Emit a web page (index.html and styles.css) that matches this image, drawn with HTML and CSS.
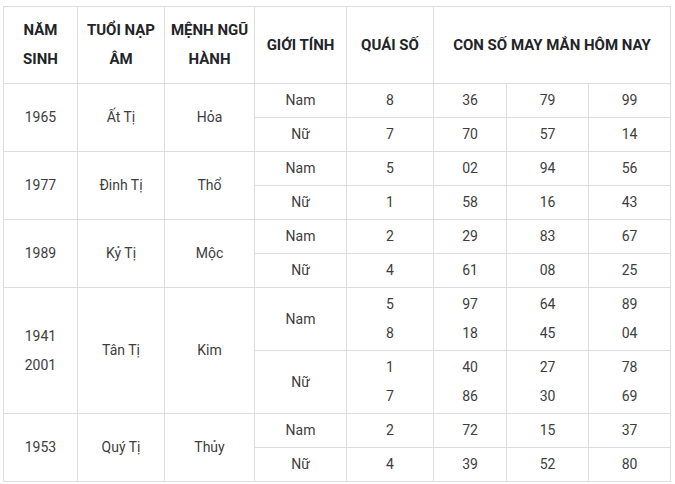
FILE: index.html
```html
<!DOCTYPE html>
<html lang="vi">
<head>
<meta charset="utf-8">
<title>Con số may mắn</title>
<link rel="stylesheet" href="styles.css">
</head>
<body>
<div class="wrap">
<table class="lucky">
  <colgroup>
    <col class="c1"><col class="c2"><col class="c3"><col class="c4"><col class="c5"><col class="c6"><col class="c7"><col class="c8">
  </colgroup>
  <thead>
    <tr>
      <th>NĂM<br>SINH</th>
      <th>TUỔI NẠP<br>ÂM</th>
      <th>MỆNH NGŨ<br>HÀNH</th>
      <th>GIỚI TÍNH</th>
      <th>QUÁI SỐ</th>
      <th colspan="3">CON SỐ MAY MẮN HÔM NAY</th>
    </tr>
  </thead>
  <tbody>
    <tr><td rowspan="2">1965</td><td rowspan="2">Ất Tị</td><td rowspan="2">Hỏa</td><td>Nam</td><td>8</td><td>36</td><td>79</td><td>99</td></tr>
    <tr><td>Nữ</td><td>7</td><td>70</td><td>57</td><td>14</td></tr>
    <tr><td rowspan="2">1977</td><td rowspan="2">Đinh Tị</td><td rowspan="2">Thổ</td><td>Nam</td><td>5</td><td>02</td><td>94</td><td>56</td></tr>
    <tr><td>Nữ</td><td>1</td><td>58</td><td>16</td><td>43</td></tr>
    <tr><td rowspan="2">1989</td><td rowspan="2">Kỷ Tị</td><td rowspan="2">Mộc</td><td>Nam</td><td>2</td><td>29</td><td>83</td><td>67</td></tr>
    <tr><td>Nữ</td><td>4</td><td>61</td><td>08</td><td>25</td></tr>
    <tr><td rowspan="2">1941<br>2001</td><td rowspan="2">Tân Tị</td><td rowspan="2">Kim</td><td>Nam</td><td>5<br>8</td><td>97<br>18</td><td>64<br>45</td><td>89<br>04</td></tr>
    <tr><td>Nữ</td><td>1<br>7</td><td>40<br>86</td><td>27<br>30</td><td>78<br>69</td></tr>
    <tr><td rowspan="2">1953</td><td rowspan="2">Quý Tị</td><td rowspan="2">Thủy</td><td>Nam</td><td>2</td><td>72</td><td>15</td><td>37</td></tr>
    <tr><td>Nữ</td><td>4</td><td>39</td><td>52</td><td>80</td></tr>
  </tbody>
</table>
</div>
</body>
</html>
```
FILE: styles.css
```css
html, body {
  margin: 0;
  padding: 0;
  background: #ffffff;
}
.wrap {
  padding: 6px 0 0 3px;
}
.lucky {
  border-collapse: collapse;
  table-layout: fixed;
  width: 667px;
  font-family: Roboto, "Liberation Sans", sans-serif;
  font-size: 14px;
  color: #3d3d3d;
}
.c1 { width: 74px; }
.c2 { width: 87px; }
.c3 { width: 90px; }
.c4 { width: 92px; }
.c5 { width: 87px; }
.c6 { width: 73px; }
.c7 { width: 82px; }
.c8 { width: 82px; }
.lucky th, .lucky td {
  border: 1px solid #dddddd;
  text-align: center;
  vertical-align: middle;
  line-height: 29px;
  padding: 2px 3px;
}
.lucky th {
  font-size: 15px;
  font-weight: 700;
  color: #222428;
  padding: 9px 2px;
}
```
